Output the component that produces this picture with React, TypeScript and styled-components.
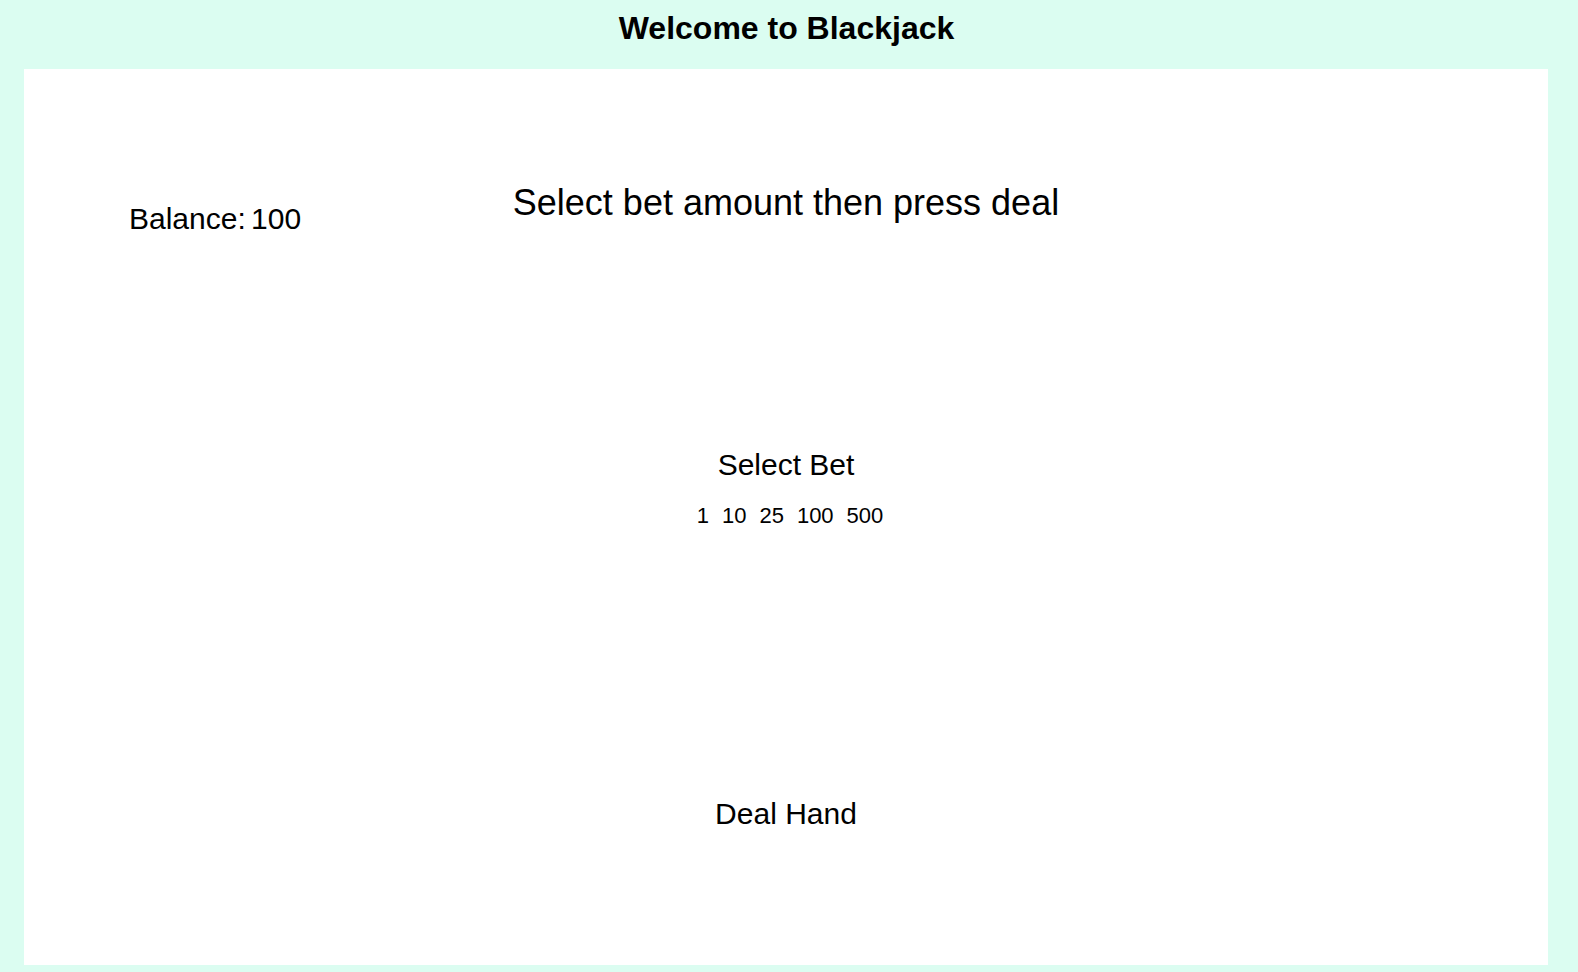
import React, { useState } from "react";
import styled, { createGlobalStyle } from "styled-components";

const GlobalStyle = createGlobalStyle`
  html, body {
    margin: 0;
    padding: 0;
    background: #dbfdf1;
  }
  body {
    font-family: "Liberation Sans", Arial, Helvetica, sans-serif;
    color: #000;
  }
`;

const Page = styled.div`
  min-height: 972px;
  display: flex;
  flex-direction: column;
  background: #dbfdf1;
`;

const Title = styled.h1`
  margin: 10px 0 22px;
  padding-right: 5px;
  font-size: 32px;
  line-height: 37px;
  font-weight: 700;
  text-align: center;
`;

const Table = styled.main`
  margin: 0 30px 0 24px;
  height: 896px;
  box-sizing: border-box;
  background: #ffffff;
  padding-top: 110px;
  display: flex;
  flex-direction: column;
`;

const TopRow = styled.div`
  display: grid;
  grid-template-columns: 1fr auto 1fr;
  align-items: start;
`;

const Balance = styled.div`
  padding-left: 105px;
  margin-top: 23px;
  font-size: 30px;
  line-height: 34px;
  word-spacing: -3px;
`;

const Message = styled.div`
  margin-top: 3px;
  font-size: 36px;
  line-height: 41px;
  text-align: center;
`;

const BetSection = styled.section`
  margin-top: 212px;
  display: flex;
  flex-direction: column;
  align-items: center;
  gap: 21px;
`;

const BetLabel = styled.div`
  font-size: 30px;
  line-height: 34px;
`;

const ChipRow = styled.div`
  display: flex;
  justify-content: center;
  padding-left: 8px;
`;

const Chip = styled.button<{ $active?: boolean }>`
  font-family: "Liberation Sans", Arial, Helvetica, sans-serif;
  font-size: 22px;
  line-height: 25px;
  padding: 0 6.5px;
  border: none;
  background: transparent;
  color: #000;
  cursor: pointer;
  font-weight: ${(p) => (p.$active ? 700 : 400)};
`;

const DealButton = styled.button`
  align-self: center;
  margin-top: 269px;
  font-family: "Liberation Sans", Arial, Helvetica, sans-serif;
  font-size: 30px;
  line-height: 34px;
  padding: 0;
  border: none;
  background: transparent;
  color: #000;
  cursor: pointer;
`;

const bets = [1, 10, 25, 100, 500];

export default function App() {
  const [bet, setBet] = useState<number | null>(null);
  return (
    <>
      <GlobalStyle />
      <Page>
        <Title>Welcome to Blackjack</Title>
        <Table>
          <TopRow>
            <Balance>Balance: 100</Balance>
            <Message>Select bet amount then press deal</Message>
            <div />
          </TopRow>
          <BetSection>
            <BetLabel>Select Bet</BetLabel>
            <ChipRow>
              {bets.map((b) => (
                <Chip key={b} $active={bet === b} onClick={() => setBet(b)}>
                  {b}
                </Chip>
              ))}
            </ChipRow>
          </BetSection>
          <DealButton>Deal Hand</DealButton>
        </Table>
      </Page>
    </>
  );
}
